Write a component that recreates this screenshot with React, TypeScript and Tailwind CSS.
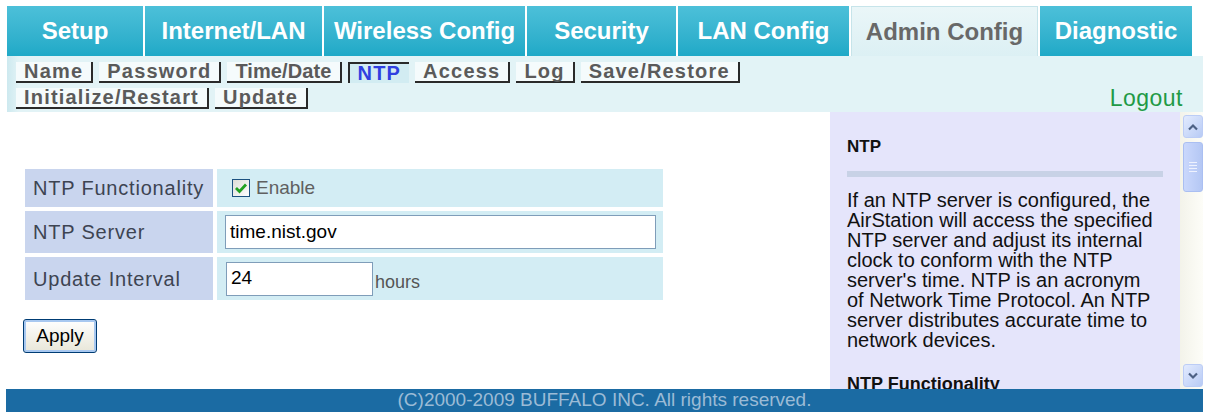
import React from "react";

const tabs = [
  { label: "Setup", w: "w-[136px]" },
  { label: "Internet/LAN", w: "w-[177px]" },
  { label: "Wireless Config", w: "w-[201px]" },
  { label: "Security", w: "w-[149px]" },
  { label: "LAN Config", w: "w-[171px]" },
  { label: "Admin Config", w: "w-[187px]", active: true },
  { label: "Diagnostic", w: "w-[152px]" },
];

const subRow1 = ["Name", "Password", "Time/Date", "NTP", "Access", "Log", "Save/Restore"];
const subRow2 = ["Initialize/Restart", "Update"];

function SubTab({ label }: { label: string }) {
  if (label === "NTP") {
    return (
      <span className="h-[21px] border-l-2 border-t-2 border-[#2a2a2a] bg-[#d2ecf2] px-[8px] text-[20px] font-bold leading-[19px] tracking-[1.2px] text-[#2f3fe0]">
        {label}
      </span>
    );
  }
  return (
    <span
      className={
        label === "Time/Date"
          ? "h-[21px] border-b-2 border-r-2 border-[#2a2a2a] bg-[#f5fbfc] px-[8px] text-[20px] font-bold leading-[19px] tracking-[0.1px] text-[#5a5a5a]"
          : "h-[21px] border-b-2 border-r-2 border-[#2a2a2a] bg-[#f5fbfc] px-[8px] text-[20px] font-bold leading-[19px] tracking-[1.2px] text-[#5a5a5a]"
      }
    >
      {label}
    </span>
  );
}

function Chevron({ up }: { up?: boolean }) {
  return (
    <svg width="12" height="8" viewBox="0 0 12 8">
      <path
        d={up ? "M2 6.5 L6 2.5 L10 6.5" : "M2 1.5 L6 5.5 L10 1.5"}
        fill="none"
        stroke="#4d6185"
        strokeWidth="2.2"
      />
    </svg>
  );
}

function ScrollButton({ up }: { up?: boolean }) {
  return (
    <div className="flex h-[23px] w-[20px] items-center justify-center rounded-[3px] border border-[#bccdf6] bg-gradient-to-br from-[#e3ebfe] to-[#b8cbf5]">
      <Chevron up={up} />
    </div>
  );
}

function CheckBox() {
  return (
    <svg width="18" height="18" viewBox="0 0 18 18">
      <defs>
        <linearGradient id="cb" x1="0" y1="0" x2="1" y2="1">
          <stop offset="0" stopColor="#dcdcd7" />
          <stop offset="1" stopColor="#ffffff" />
        </linearGradient>
      </defs>
      <rect x="0.5" y="0.5" width="17" height="17" fill="url(#cb)" stroke="#1c5180" />
      <path d="M4 9 L7.5 12.5 L14 5.5" fill="none" stroke="#21a121" strokeWidth="2.8" />
    </svg>
  );
}

export default function App() {
  return (
    <div className="h-[412px] w-[1209px] overflow-hidden bg-white pl-[6px] pr-[6px] pt-[6px] font-['Liberation_Sans',Arial,sans-serif]">
      {/* main tabs */}
      <div className="ml-[1px] flex h-[50px] gap-[2px]">
        {tabs.map((t) =>
          t.active ? (
            <div
              key={t.label}
              className={`${t.w} flex items-center justify-center border-l border-r border-t border-[#c6e4ea] bg-gradient-to-b from-[#eaf6f8] to-[#dcf0f4] text-[24px] font-bold text-[#686868]`}
            >
              {t.label}
            </div>
          ) : (
            <div
              key={t.label}
              className={`${t.w} flex items-center justify-center bg-gradient-to-b from-[#4cc0d9] to-[#1ea9c7] text-[24px] font-bold text-white`}
            >
              {t.label}
            </div>
          )
        )}
      </div>

      {/* sub tabs */}
      <div className="ml-[1px] flex h-[56px] items-end justify-between bg-[linear-gradient(to_right,#cde9ef,#e2f3f6_12px,#e2f3f6)] pb-[3px] pl-[9px] pr-[20px] pt-[6px]">
        <div className="flex flex-col gap-[5px]">
          <div className="flex gap-[6px]">
            {subRow1.map((s) => (
              <SubTab key={s} label={s} />
            ))}
          </div>
          <div className="flex gap-[6px]">
            {subRow2.map((s) => (
              <SubTab key={s} label={s} />
            ))}
          </div>
        </div>
        <span className="text-[23px] leading-[22px] tracking-[0.5px] text-[#1f9a46]">Logout</span>
      </div>

      {/* content */}
      <div className="flex h-[277px]">
        <div className="flex-1 pl-[17px] pt-[57px]">
          <div className="ml-[2px] grid w-[638px] grid-cols-[188px_446px] gap-[4px] text-[20px] tracking-[0.8px]">
            <div className="flex h-[38px] items-center bg-[#c9d5ee] pl-[8px] text-[#3d4452]">NTP Functionality</div>
            <div className="flex h-[38px] items-center gap-[6px] bg-[#d3edf4] pl-[15px]">
              <CheckBox />
              <span className="text-[19px] tracking-normal text-[#606060]">Enable</span>
            </div>
            <div className="flex h-[42px] items-center bg-[#c9d5ee] pl-[8px] text-[#3d4452]">NTP Server</div>
            <div className="flex h-[42px] items-center bg-[#d3edf4] pl-[8px]">
              <div className="flex h-[34px] w-[431px] items-center border border-[#7f9db9] bg-white pl-[4px] text-[19px] tracking-normal text-black">
                time.nist.gov
              </div>
            </div>
            <div className="flex h-[43px] items-center bg-[#c9d5ee] pl-[8px] text-[#3d4452]">Update Interval</div>
            <div className="flex h-[43px] items-center bg-[#d3edf4] pl-[9px]">
              <div className="flex h-[34px] w-[147px] items-center border border-[#7f9db9] bg-white pl-[4px] text-[19px] tracking-normal text-black">
                24
              </div>
              <span className="ml-[2px] mt-[8px] text-[18px] tracking-normal text-[#555555]">hours</span>
            </div>
          </div>
          <button
            type="button"
            className="mt-[19px] h-[34px] w-[74px] rounded-[3px] border border-[#003c74] bg-gradient-to-b from-white to-[#e8e6d8] text-[19px] text-black shadow-[inset_0_0_0_2px_#a8c8f0]"
          >
            Apply
          </button>
        </div>

        {/* help panel */}
        <div className="w-[350px] overflow-hidden bg-[#e5e5fb] pl-[17px] pr-[15px] pt-[25px] text-[#111111]">
          <div className="text-[17px] font-bold leading-[20px]">NTP</div>
          <div className="mt-[14px] h-[6px] w-[316px] bg-[#c8d2e6]" />
          <p className="mt-[13px] whitespace-nowrap text-[20px] leading-[20px]">
            If an NTP server is configured, the
            <br />
            AirStation will access the specified
            <br />
            NTP server and adjust its internal
            <br />
            clock to conform with the NTP
            <br />
            server's time. NTP is an acronym
            <br />
            of Network Time Protocol. An NTP
            <br />
            server distributes accurate time to
            <br />
            network devices.
          </p>
          <div className="mt-[24px] text-[18px] font-bold leading-[20px]">NTP Functionality</div>
        </div>

        {/* scrollbar */}
        <div className="flex w-[23px] flex-col bg-gradient-to-r from-[#f3f3ea] to-[#fdfdf8] pb-[2px] pl-[3px] pt-[3px]">
          <ScrollButton up />
          <div className="mt-[4px] flex h-[50px] w-[20px] flex-col items-center justify-center gap-[2px] rounded-[3px] border border-[#aabff2] bg-gradient-to-r from-[#cad8fc] to-[#b4c7f4]">
            <div className="h-[1px] w-[8px] bg-[#eef2fe]" />
            <div className="h-[1px] w-[8px] bg-[#eef2fe]" />
            <div className="h-[1px] w-[8px] bg-[#eef2fe]" />
            <div className="h-[1px] w-[8px] bg-[#eef2fe]" />
          </div>
          <div className="flex-1" />
          <ScrollButton />
        </div>
      </div>

      {/* footer */}
      <div className="flex h-[23px] items-center justify-center bg-[#1b6ba3] text-[19px] text-[#9bbbd6]">
        (C)2000-2009 BUFFALO INC. All rights reserved.
      </div>
    </div>
  );
}
